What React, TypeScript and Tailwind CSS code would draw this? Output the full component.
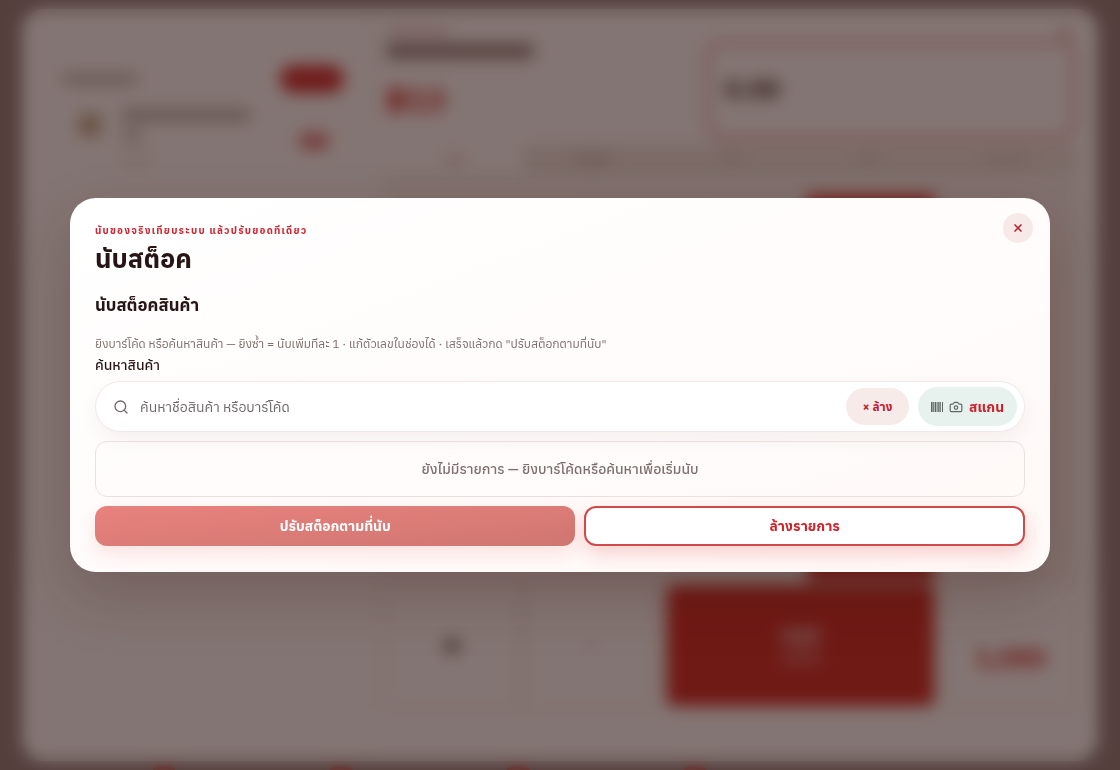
import React from "react";
import { Camera, Search } from "lucide-react";

const tabs = ["w-6 bg-[#efd0ce]", "w-10 bg-[#cfc4be]", "w-6 bg-[#dcd1cb]", "w-6 bg-[#dcd1cb]", "w-12 bg-[#dcd1cb]"];

function Backdrop() {
  return (
    <div aria-hidden="true" className="flex h-screen flex-col overflow-hidden px-[22px] pt-[9px] font-bold">
      <div className="flex h-[calc(100vh-18px)] shrink-0 rounded-[22px] bg-white">
        <aside className="flex w-[350px] shrink-0 flex-col border-r-2 border-[#f8f2f0] pr-[26px] pl-10 pt-14">
          <div className="flex items-center justify-between">
            <span className="h-2 w-19 rounded bg-[#b3a7a5]" />
            <span className="h-7 w-16 rounded-full bg-[#d3393b]" />
          </div>
          <div className="flex gap-4 pt-4 pl-4">
            <span className="mt-1 size-6 rounded-full bg-[#c4ad8d]" />
            <div className="ml-1 flex w-32 flex-col gap-2">
              <span className="h-3 w-full rounded bg-[#bfb5b3]" />
              <span className="h-3 w-5 rounded bg-[#d0c7c5]" />
              <span className="h-5 w-7 rounded bg-[#f5f1ef]" />
            </div>
            <span className="mt-6 mr-4 ml-auto h-4 w-7 rounded bg-[#dd7b79]" />
          </div>
        </aside>
        <main className="flex min-w-0 flex-1 flex-col pr-[22px] pl-[14px]">
          <div className="flex h-[136px] justify-between">
            <div className="flex flex-col items-start pt-[18px]">
              <span className="h-2 w-16 rounded bg-[#edcecb]" />
              <span className="mt-2 h-4 w-[148px] rounded bg-[#9f8f8d]" />
              <span className="pt-5 text-[32px] leading-10 text-[#d33934]">฿13</span>
            </div>
            <div className="flex w-[370px] flex-col pt-5">
              <span className="mr-1 h-2 w-3 self-end bg-[#e8a9a6]" />
              <div className="mt-1 flex h-[98px] items-center rounded-2xl border-[3px] border-[#e07a7a] px-4 pb-1 text-[26px] text-[#4a3634]">0.00</div>
            </div>
          </div>
          <div className="grid h-7 grid-cols-5 bg-[#eee7e2]">
            {tabs.map((bar, i) => (
              <span key={i} className={i === 0 ? "flex items-center justify-center bg-white" : "flex items-center justify-center"}>
                <span className={`h-2 rounded ${bar}`} />
              </span>
            ))}
          </div>
          <div className="mb-[53px] grid min-h-0 flex-1 grid-cols-5 grid-rows-[22px_386px_1fr] gap-x-3 border-2 border-t-0 border-[#f1e9e5] bg-[#f9f4f1]">
            <span className="col-span-5" />
            <span className="col-span-3" />
            <span className="bg-[#d33934]" />
            <span />
            <span className="mt-1 flex items-center justify-center rounded bg-white"><span className="size-4 rounded-full bg-[#8b7a78]" /></span>
            <span className="mt-1 flex items-center justify-center rounded bg-white"><span className="size-1 rounded-full bg-[#7c6a68]" /></span>
            <span className="col-span-2 mt-1 flex flex-col items-center justify-center gap-2 rounded-lg bg-[#d3302a]">
              <span className="h-4 w-10 rounded bg-[#e08886]" />
              <span className="h-3 w-10 rounded bg-[#da6966]" />
            </span>
            <span className="mt-1 flex items-center justify-center rounded bg-white pt-6 text-[26px] text-[#d33934]">1,080</span>
          </div>
        </main>
      </div>
      <div className="flex gap-[153px] px-[130px] pt-1">
        {[0, 1, 2, 3].map((i) => (
          <span key={i} className="h-4 w-6 shrink-0 rounded-full bg-[#b8524e]" />
        ))}
      </div>
    </div>
  );
}

function BarcodeIcon() {
  return (
    <svg viewBox="0 0 12 10" className="h-2.5 w-3" fill="#5f6664">
      <path d="M0 0h1.6v10H0zM2.2 0h.8v10h-.8zM3.6 0h1.6v10H3.6zM5.8 0h.8v10h-.8zM7.2 0h1.4v10H7.2zM9.2 0h.8v10h-.8zM11 0h1v10h-1z" />
    </svg>
  );
}

export default function App() {
  return (
    <div className="relative min-h-screen overflow-hidden bg-[#968585] font-['Anuphan','IBM_Plex_Sans_Thai','Noto_Sans_Thai',sans-serif] text-[#261514]">
      <Backdrop />
      <div className="fixed inset-0 flex items-center justify-center bg-[#220905]/56 p-4 backdrop-blur-[8px]">
        <section
          role="dialog"
          aria-modal="true"
          aria-labelledby="count-title"
          className="relative w-full max-w-[980px] rounded-[26px] bg-linear-to-br from-white to-[#fff9f7] px-[25px] pt-[25px] pb-[26px] shadow-[0_24px_60px_rgba(60,20,15,0.22)]"
        >
          <button
            type="button"
            aria-label="ปิด"
            className="absolute top-[15px] right-[17px] flex size-[30px] items-center justify-center rounded-full bg-[#f7e9e8] text-[#b3202a]"
          >
            <svg viewBox="0 0 8 8" className="size-2" stroke="currentColor" strokeWidth="1.5" fill="none">
              <path d="M.5.5l7 7M7.5.5l-7 7" />
            </svg>
          </button>
          <p className="text-[10px] leading-4 font-bold tracking-[0.12em] text-[#cf2730]">นับของจริงเทียบระบบ แล้วปรับยอดทีเดียว</p>
          <h2 id="count-title" className="text-[26px] leading-[38px] font-bold">นับสต็อค</h2>
          <h3 className="mt-3.5 text-[17px] leading-7 font-bold">นับสต็อคสินค้า</h3>
          <p className="mt-[15px] text-xs leading-5 text-[#7c6f6d]">
            ยิงบาร์โค้ด หรือค้นหาสินค้า — ยิงซ้ำ = นับเพิ่มทีละ 1 · แก้ตัวเลขในช่องได้ · เสร็จแล้วกด "ปรับสต็อกตามที่นับ"
          </p>
          <label htmlFor="product-search" className="block text-sm leading-[22px] font-medium">ค้นหาสินค้า</label>
          <div className="mt-[5px] flex h-[51px] items-center rounded-full border border-[#f1e9e8] bg-white pr-[7px] pl-[17px] shadow-[0_8px_20px_rgba(60,20,15,0.05)]">
            <Search className="size-4 shrink-0 text-[#6f6a69]" strokeWidth={2} />
            <input
              id="product-search"
              type="text"
              placeholder="ค้นหาชื่อสินค้า หรือบาร์โค้ด"
              className="ml-[11px] min-w-0 flex-1 bg-transparent text-sm outline-none placeholder:text-[#6f6a69]"
            />
            <button type="button" className="h-[37px] w-[63px] rounded-full bg-[#f7ebea] text-xs font-bold text-[#c3202a]">× ล้าง</button>
            <button type="button" className="ml-[9px] flex h-[39px] w-[99px] items-center justify-center gap-1.5 rounded-full bg-[#e7f2ef] text-sm font-bold text-[#cf2129]">
              <BarcodeIcon />
              <Camera className="size-3.5 text-[#5f6664]" />
              สแกน
            </button>
          </div>
          <div className="mt-[9px] flex h-14 items-center justify-center rounded-xl border border-[#eae1df] text-sm font-medium text-[#7c6f6d]">
            ยังไม่มีรายการ — ยิงบาร์โค้ดหรือค้นหาเพื่อเริ่มนับ
          </div>
          <div className="mt-[9px] flex gap-[9px]">
            <button type="button" className="h-10 flex-[482] rounded-xl bg-linear-to-br from-[#e9827e] to-[#cf7671] text-sm font-bold text-white shadow-[0_8px_20px_rgba(220,40,40,0.12)]">ปรับสต็อกตามที่นับ</button>
            <button type="button" className="h-10 flex-[438] rounded-xl border-2 border-[#d04a4a] bg-white text-sm font-bold text-[#cf2129] shadow-[0_8px_20px_rgba(220,40,40,0.2)]">ล้างรายการ</button>
          </div>
        </section>
      </div>
    </div>
  );
}
